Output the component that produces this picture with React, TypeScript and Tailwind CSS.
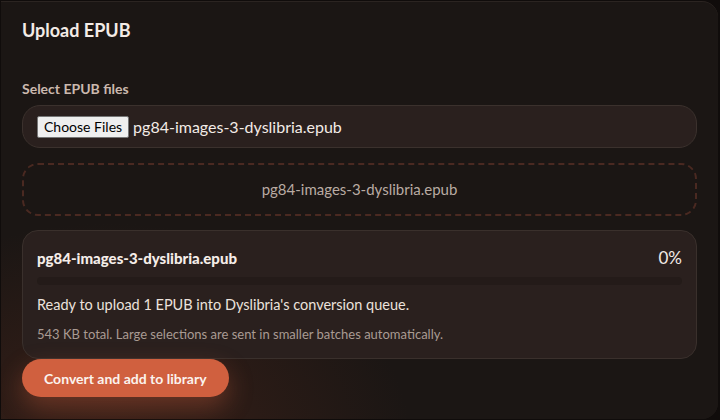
const fileName = "pg84-images-3-dyslibria.epub";

export default function App() {
  return (
    <div
      className="w-[720px] h-[420px] overflow-hidden bg-[#100c0b] p-[1px] pr-[2px]"
      style={{ fontFamily: "Lato, 'Noto Sans', sans-serif" }}
    >
      <div className="h-full rounded-tr-[16px] rounded-br-[16px] border-t border-[#2b2421] bg-[#1b1614] px-[21px] pt-[14px] bg-[radial-gradient(ellipse_at_15%_105%,#3a2018_0%,#1b1614_35%)]">
        <h1 className="text-[18px] font-bold leading-[28px] text-[#f3ebe6]">Upload EPUB</h1>

        <label className="mt-[36px] block text-[14px] font-bold leading-[18px] text-[#cbb9af]">
          Select EPUB files
        </label>

        <div className="mt-[7px] flex h-[43px] items-center rounded-[18px] border border-[#3b312d] bg-[#2a201e] px-[14px]">
          <span className="rounded-[2px] border border-[#767676] bg-[#efefef] px-[6px] py-[1px] text-[14px] leading-[18px] text-black">
            Choose Files
          </span>
          <span className="ml-[4px] text-[16px] text-[#f3ebe6]">{fileName}</span>
        </div>

        <div className="mt-[15px] flex h-[53px] items-center justify-center rounded-[16px] border-2 border-dashed border-[#4a2921] text-[15px] text-[#b9aba3]">
          {fileName}
        </div>

        <div className="mt-[14px] rounded-[16px] border border-[#3a302c] bg-[#2a201e] px-[14px] pt-[15px] pb-[15px]">
          <div className="flex h-[24px] items-center justify-between">
            <span className="text-[15px] font-black text-[#f5ede8]">{fileName}</span>
            <span className="text-[17px] text-[#f3ebe6]">0%</span>
          </div>
          <div className="mt-[7px] h-[8px] rounded-full bg-[#241b19]">
            <div className="h-full rounded-full bg-[#d0603f]" style={{ width: "0%" }} />
          </div>
          <p className="mt-[10px] text-[14.5px] leading-[20px] text-[#ece2dc]">
            Ready to upload 1 EPUB into Dyslibria's conversion queue.
          </p>
          <p className="mt-[10px] text-[13px] leading-[18px] text-[#a99b93]">
            543 KB total. Large selections are sent in smaller batches automatically.
          </p>
        </div>

        <button className="mt-0 h-[38px] rounded-full bg-[#d0603f] px-[22px] text-[14px] font-bold text-[#fbf3ee] shadow-[0_10px_24px_rgba(208,96,63,0.35)]">
          Convert and add to library
        </button>
      </div>
    </div>
  );
}
